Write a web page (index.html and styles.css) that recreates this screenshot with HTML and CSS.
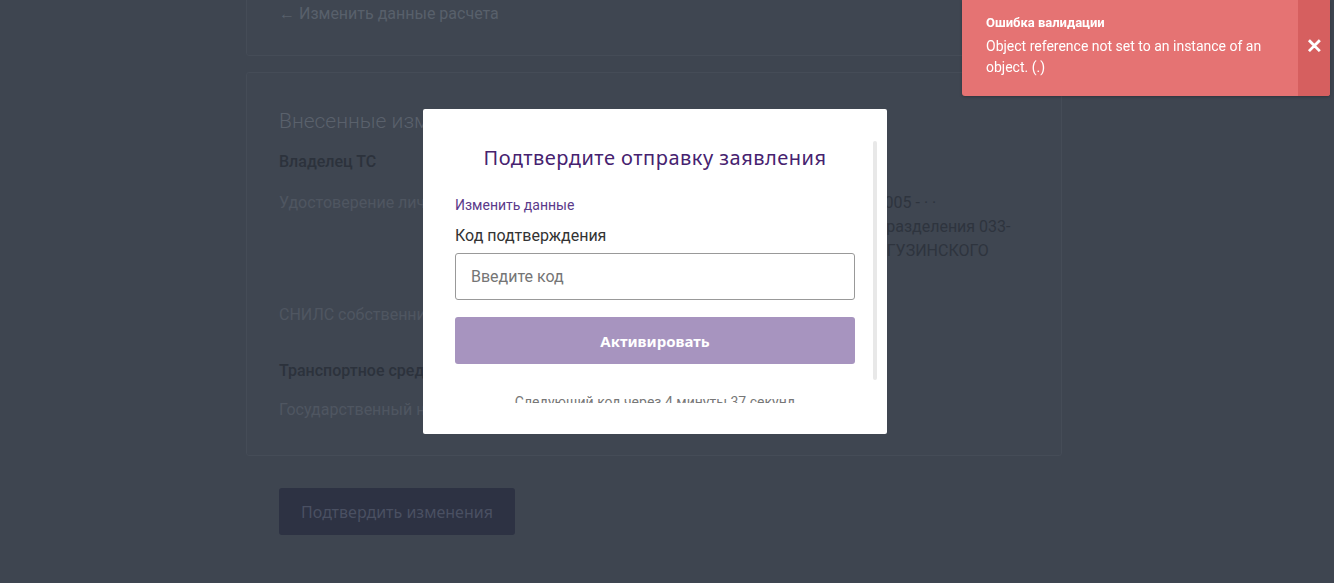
FILE: index.html
```html
<!DOCTYPE html>
<html>
<head>
	<meta charset="UTF-8">
	<link rel="stylesheet" href="styles.css">
</head>
<body>

	<div class="page">
		<div class="card card_back">
			<a class="back_link">← Изменить данные расчета</a>
		</div>

		<div class="card card_changes">
			<h2 class="changes_title">Внесенные изменения</h2>

			<div class="section_title">Владелец ТС</div>
			<div class="row">
				<div class="row_label">Удостоверение личности</div>
				<div class="row_value">Паспорт РФ 8105 000000 10.10.2005 - · ·<br>выд. отделом УФМС РФ, код подразделения 033-<br>002, В КИРЕНСКОМ РАЙОНЕ БАРГУЗИНСКОГО<br>РАЙОНА</div>
			</div>
			<div class="row">
				<div class="row_label">СНИЛС собственника</div>
				<div class="row_value">000-000-000 00</div>
			</div>

			<div class="section_title section_gap">Транспортное средство</div>
			<div class="row row_last">
				<div class="row_label">Государственный номер</div>
				<div class="row_value">А000АА 03</div>
			</div>
		</div>

		<button class="btn_confirm">Подтвердить изменения</button>
	</div>

	<div class="modal">
		<div class="modal_scroll">
			<div class="modal_title">Подтвердите отправку заявления</div>
			<a class="modal_link">Изменить данные</a>
			<label class="modal_label">Код подтверждения</label>
			<input class="modal_input" type="text" placeholder="Введите код">
			<button class="modal_btn">Активировать</button>
			<p class="modal_timer">Следующий код через 4 минуты 37 секунд</p>
		</div>
		<div class="modal_scrollbar"></div>
	</div>

	<div class="toast">
		<div class="toast_body">
			<div class="toast_title">Ошибка валидации</div>
			<div class="toast_text">Object reference not set to an instance of an object. (.)</div>
		</div>
		<div class="toast_close">✕</div>
	</div>

</body>
</html>
```

FILE: styles.css
```css
html, body{
	margin:0;
	padding:0;
	height:100%;
	overflow:hidden;
}
/* страница под затемнением */
body{
	background:#3e4550;
	font-family: Roboto, "Liberation Sans", sans-serif;
	color:#2e343e;
}

.page{
	width:816px;
	margin-left:246px;
}

.card{
	background:#3f4651;
	border:1px solid #454c57;
	border-radius:3px;
	box-sizing:border-box;
}
.card_back{
	margin-top:-30px;
	padding:31px 32px 29px;
}
.back_link{
	display:block;
	font-size:16px;
	line-height:24px;
	color:#58606b;
}
.card_changes{
	margin-top:16px;
	padding:34px 32px 33px;
}
.changes_title{
	margin:0;
	font-size:21px;
	font-weight:300;
	line-height:28px;
	color:#5a616c;
}
.section_title{
	margin-top:15px;
	font-size:16px;
	font-weight:500;
	line-height:24px;
	color:#2c323c;
}
.section_gap{
	margin-top:32px;
}
.row{
	display:grid;
	grid-template-columns:361px 1fr;
	margin-top:17px;
	margin-bottom:16px;
	font-size:16px;
	line-height:24px;
}
.row + .row{
	margin-top:0;
}
.row_last{
	margin-top:15px;
	margin-bottom:0;
}
.row_label{
	color:#4f5661;
}
.row_value{
	color:#2e343e;
	white-space:nowrap;
}

.btn_confirm{
	display:block;
	margin:32px 0 0 33px;
	width:236px;
	height:47px;
	border:none;
	border-radius:3px;
	background:#2d3243;
	color:#4a5062;
	font-family:"Noto Sans", sans-serif;
	font-size:16px;
}

.modal{
	position:fixed;
	left:423px;
	top:109px;
	width:464px;
	height:325px;
	box-sizing:border-box;
	padding:32px 10px 31px 10px;
	background:#fff;
	border-radius:2px;
}
.modal_scroll{
	height:262px;
	overflow:hidden;
	box-sizing:border-box;
	padding:3px 22px 24px 22px;
}
.modal_scrollbar{
	position:absolute;
	right:10px;
	top:32px;
	width:4px;
	height:239px;
	background:#e8e8e8;
	border-radius:2px;
}
.modal_title{
	text-align:center;
	font-family:"Noto Sans", sans-serif;
	font-size:20px;
	line-height:28px;
	letter-spacing:0.5px;
	color:#46226f;
}
.modal_link{
	display:block;
	margin-top:23px;
	font-size:14px;
	line-height:20px;
	color:#5b3a8a;
}
.modal_label{
	display:block;
	margin-top:10px;
	font-size:16px;
	line-height:22px;
	color:#333;
}
.modal_input{
	display:block;
	margin-top:6px;
	width:400px;
	height:47px;
	box-sizing:border-box;
	border:1px solid #999;
	border-radius:3px;
	padding:0 15px;
	font-family:Roboto, sans-serif;
	font-size:16px;
	color:#333;
	outline:none;
}
.modal_input::placeholder{
	color:#757575;
}
.modal_btn{
	display:block;
	margin-top:17px;
	width:400px;
	height:47px;
	border:none;
	border-radius:3px;
	background:#a794bf;
	color:#fff;
	font-family:"Noto Sans", sans-serif;
	font-weight:bold;
	font-size:15px;
}
.modal_timer{
	margin:29px 0 0;
	text-align:center;
	font-size:14px;
	line-height:18px;
	color:#777;
}

.toast{
	position:fixed;
	top:0;
	right:4px;
	width:368px;
	height:96px;
	display:flex;
	background:#e57373;
	border-radius:0 0 3px 3px;
	box-shadow:0 1px 3px rgba(0,0,0,0.25);
	color:#fff;
}
.toast_body{
	flex:1;
	padding:14px 20px 0 24px;
}
.toast_title{
	font-size:13px;
	font-weight:bold;
	line-height:18px;
}
.toast_text{
	margin-top:4px;
	font-size:14px;
	line-height:21px;
}
.toast_close{
	width:32px;
	background:#d65f5f;
	display:flex;
	align-items:center;
	justify-content:center;
	font-size:20px;
	font-weight:bold;
	border-radius:0 0 3px 0;
	padding-bottom:4px;
	box-sizing:border-box;
}
```
